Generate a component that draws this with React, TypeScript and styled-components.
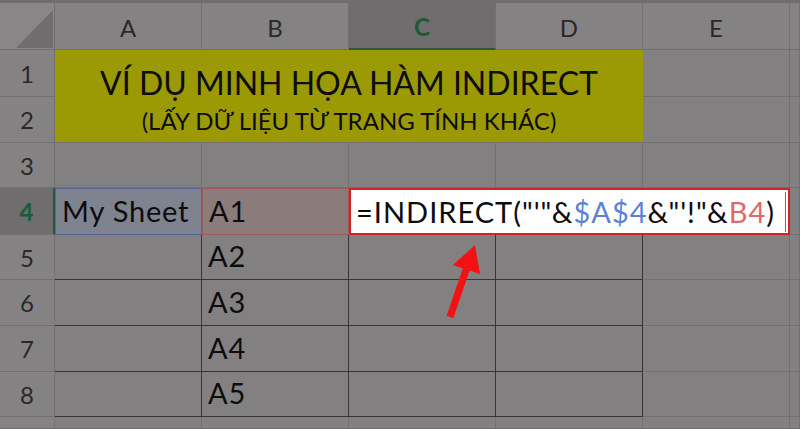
import React from "react";
import styled, { createGlobalStyle, css } from "styled-components";

const GlobalStyle = createGlobalStyle`
  html, body {
    margin: 0;
    padding: 0;
    background: #838081;
    overflow: hidden;
  }
  * {
    box-sizing: border-box;
  }
`;

const FONT = `Lato, "Open Sans", "Noto Sans", sans-serif`;

const GRID_LINE = "#737071";
const TABLE_LINE = "#383637";

const Frame = styled.div`
  position: relative;
  width: 800px;
  height: 429px;
  overflow: hidden;
  font-family: ${FONT};
  border-top: 3px solid #6f6d6e;
`;

const Sheet = styled.div`
  display: grid;
  grid-template-columns: 55px repeat(5, 147px) 10px;
  grid-template-rows: 47px 47px 46px 45px 47px 45px 46px 46px 45px 12px;
  background: #838081;
`;

const Corner = styled.div`
  position: relative;
  background: #888687;
  border-right: 1px solid ${GRID_LINE};
  border-bottom: 1px solid ${GRID_LINE};

  &::after {
    content: "";
    position: absolute;
    left: 16px;
    top: 7px;
    width: 37px;
    height: 38px;
    background: #6f6d6e;
    clip-path: polygon(100% 0, 100% 100%, 0 100%);
  }
`;

const ColHeader = styled.div<{ $active?: boolean }>`
  display: flex;
  align-items: center;
  justify-content: center;
  padding-top: 2px;
  font-size: 24px;
  color: #2a2828;
  background: #858283;
  border-right: 1px solid ${GRID_LINE};
  border-bottom: 1px solid ${GRID_LINE};

  ${(p) =>
    p.$active &&
    css`
      background: #6f6d6e;
      color: #1d5a35;
      font-weight: 700;
      border-bottom: 2px solid #2a5a3a;
    `}
`;

const RowHeader = styled.div<{ $active?: boolean }>`
  display: flex;
  align-items: center;
  justify-content: center;
  font-size: 24px;
  color: #2a2828;
  background: #858283;
  border-right: 1px solid ${GRID_LINE};
  border-bottom: 1px solid ${GRID_LINE};

  ${(p) =>
    p.$active &&
    css`
      background: #6f6d6e;
      color: #1d5a35;
      font-weight: 700;
      border-right: 2px solid #2a5a3a;
    `}
`;

type Tone = "plain" | "blue" | "red";

const toneStyles = {
  plain: css``,
  blue: css`
    background: #7f828f;
    border: 1px solid #56649a;
  `,
  red: css`
    background: #8c7b7b;
    border: 1px solid #a05a5a;
  `,
};

const Cell = styled.div<{ $tone?: Tone; $boxed?: boolean }>`
  display: flex;
  align-items: flex-end;
  padding: 0 0 9px 6px;
  font-size: 29px;
  letter-spacing: 0.8px;
  line-height: 1;
  color: #0d0d0d;
  white-space: nowrap;
  border-right: 1px solid ${GRID_LINE};
  border-bottom: 1px solid ${GRID_LINE};

  ${(p) =>
    p.$boxed &&
    css`
      border-right-color: ${TABLE_LINE};
      border-bottom-color: ${TABLE_LINE};
    `}
  ${(p) => toneStyles[p.$tone ?? "plain"]}
`;

const TitleBlock = styled.div`
  grid-column: 2 / 6;
  grid-row: 2 / 4;
  display: flex;
  flex-direction: column;
  align-items: center;
  background: #9c9a04;
  color: #0d0d0d;
  border-bottom: 1px solid ${GRID_LINE};
`;

const TitleMain = styled.div`
  margin-top: 17px;
  font-size: 32px;
  line-height: 1;
`;

const TitleSub = styled.div`
  margin-top: 10px;
  font-size: 24px;
  line-height: 1;
`;

const FormulaCell = styled.div`
  grid-column: 4 / 7;
  display: flex;
  align-items: center;
  padding: 0 0 0 5px;
  background: #ffffff;
  border: 2px solid #d42222;
  font-size: 29px;
  letter-spacing: 1px;
  color: #0d0d0d;
  white-space: nowrap;
`;

const Ref = styled.span<{ $color: string }>`
  color: ${(p) => p.$color};
`;

const Caret = styled.span`
  display: inline-block;
  width: 1px;
  height: 40px;
  margin-left: 10px;
  background: #6a6a6a;
`;

const Arrow = styled.svg`
  position: absolute;
  left: 440px;
  top: 238px;
  overflow: visible;
`;

const columns = ["A", "B", "C", "D", "E", ""];

const tableRows = [
  { n: 5, b: "A2" },
  { n: 6, b: "A3" },
  { n: 7, b: "A4" },
  { n: 8, b: "A5" },
];

export default function App() {
  return (
    <>
      <GlobalStyle />
      <Frame>
        <Sheet>
          <Corner />
          {columns.map((c, i) => (
            <ColHeader key={i} $active={c === "C"}>
              {c}
            </ColHeader>
          ))}

          <RowHeader>1</RowHeader>
          <TitleBlock>
            <TitleMain>VÍ DỤ MINH HỌA HÀM INDIRECT</TitleMain>
            <TitleSub>(LẤY DỮ LIỆU TỪ TRANG TÍNH KHÁC)</TitleSub>
          </TitleBlock>
          <Cell />
          <Cell />

          <RowHeader>2</RowHeader>
          <Cell />
          <Cell />

          <RowHeader>3</RowHeader>
          {columns.map((c, i) => (
            <Cell key={i} />
          ))}

          <RowHeader $active>4</RowHeader>
          <Cell $tone="blue">My Sheet</Cell>
          <Cell $tone="red">A1</Cell>
          <FormulaCell>
            =INDIRECT("'"&amp;<Ref $color="#5b82d6">$A$4</Ref>&amp;"'!"&amp;
            <Ref $color="#e06868">B4</Ref>)<Caret />
          </FormulaCell>
          <Cell />

          {tableRows.map((r) => (
            <React.Fragment key={r.n}>
              <RowHeader>{r.n}</RowHeader>
              <Cell $boxed />
              <Cell $boxed>{r.b}</Cell>
              <Cell $boxed />
              <Cell $boxed />
              <Cell />
              <Cell />
            </React.Fragment>
          ))}

          <RowHeader />
          {columns.map((c, i) => (
            <Cell key={i} />
          ))}
        </Sheet>

        <Arrow width="45" height="80" viewBox="0 0 45 80">
          {/* red pointer aimed at the formula */}
          <line x1="10" y1="76" x2="27" y2="26" stroke="#f21212" strokeWidth="7" />
          <polygon points="35,4 13,24 40,33" fill="#f21212" />
        </Arrow>
      </Frame>
    </>
  );
}
